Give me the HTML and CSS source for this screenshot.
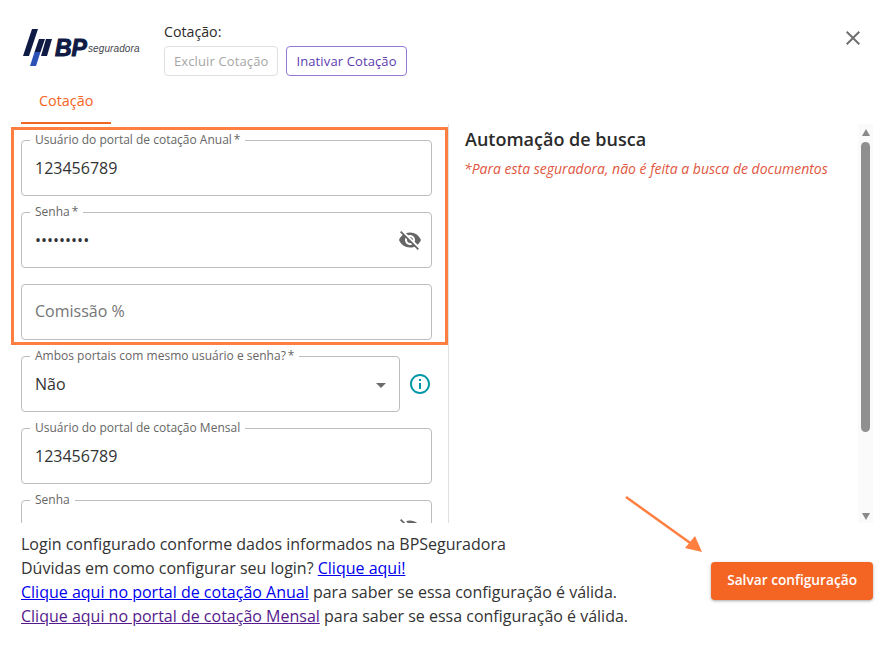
FILE: index.html
```html
<!DOCTYPE html>
<html lang="pt-BR">
<head>
<meta charset="utf-8">
<title>Cotação</title>
<link rel="stylesheet" href="styles.css">
</head>
<body>
<div class="dialog">
  <header class="header">
    <div class="logo">
      <svg class="logo-bars" width="33" height="40" viewBox="0 0 33 40">
        <polygon points="10,1 16,1 7,28 1,28" fill="#0f1a45"/>
        <polygon points="17,11 23,11 18.500,24 12.500,24" fill="#0f1a45"/>
        <polygon points="12.500,24 18.500,24 14,38 8,38" fill="#2c52b8"/>
        <polygon points="24,11 30,11 25,28 19,28" fill="#0f1a45"/>
      </svg>
      <span class="logo-bp">BP</span>
      <span class="logo-sub">seguradora</span>
    </div>
    <div class="quote">
      <div class="quote-label">Cotação:</div>
      <div class="quote-actions">
        <span class="btn btn-disabled">Excluir Cotação</span>
        <span class="btn btn-outline">Inativar Cotação</span>
      </div>
    </div>
    <svg class="close" width="24" height="24" viewBox="0 0 24 24"><path d="M19 6.41 17.59 5 12 10.59 6.41 5 5 6.41 10.59 12 5 17.59 6.41 19 12 13.41 17.59 19 19 17.59 13.41 12z"/></svg>
  </header>

  <nav class="tabs"><span class="tab">Cotação</span></nav>

  <main class="content">
    <section class="form">
      <div class="field"><span class="label">Usuário do portal de cotação Anual&#8201;*</span><span class="value">123456789</span></div>
      <div class="field"><span class="label">Senha&#8201;*</span><span class="value dots">•••••••••</span>
        <svg class="eye" width="24" height="24" viewBox="0 0 24 24"><path d="M12 7c2.76 0 5 2.24 5 5 0 .65-.13 1.26-.36 1.83l2.92 2.92c1.51-1.26 2.7-2.89 3.43-4.75-1.73-4.39-6-7.5-11-7.5-1.4 0-2.74.25-3.98.7l2.16 2.16C10.74 7.13 11.35 7 12 7zM2 4.27l2.28 2.28.46.46C3.08 8.3 1.78 10.02 1 12c1.73 4.39 6 7.5 11 7.5 1.55 0 3.03-.3 4.38-.84l.42.42L19.73 22 21 20.73 3.27 3 2 4.27zM7.53 9.8l1.55 1.55c-.05.21-.08.43-.08.65 0 1.66 1.34 3 3 3 .22 0 .44-.03.65-.08l1.55 1.55c-.67.33-1.41.53-2.2.53-2.76 0-5-2.24-5-5 0-.79.2-1.53.53-2.2zm4.31-.78 3.15 3.15.02-.16c0-1.66-1.34-3-3-3l-.17.01z"/></svg>
      </div>
      <div class="field"><span class="value placeholder">Comissão %</span></div>
      <div class="select-row">
        <div class="field field-select"><span class="label">Ambos portais com mesmo usuário e senha?&#8201;*</span><span class="value">Não</span><span class="caret"></span></div>
        <svg class="info" width="24" height="24" viewBox="0 0 24 24"><path d="M11 7h2v2h-2zm0 4h2v6h-2zm1-9C6.48 2 2 6.48 2 12s4.48 10 10 10 10-4.48 10-10S17.52 2 12 2zm0 18c-4.41 0-8-3.59-8-8s3.59-8 8-8 8 3.59 8 8-3.59 8-8 8z"/></svg>
      </div>
      <div class="field"><span class="label">Usuário do portal de cotação Mensal</span><span class="value">123456789</span></div>
      <div class="field"><span class="label">Senha</span>
        <svg class="eye" width="24" height="24" viewBox="0 0 24 24"><path d="M12 7c2.76 0 5 2.24 5 5 0 .65-.13 1.26-.36 1.83l2.92 2.92c1.51-1.26 2.7-2.89 3.43-4.75-1.73-4.39-6-7.5-11-7.5-1.4 0-2.74.25-3.98.7l2.16 2.16C10.74 7.13 11.35 7 12 7zM2 4.27l2.28 2.28.46.46C3.08 8.3 1.78 10.02 1 12c1.73 4.39 6 7.5 11 7.5 1.55 0 3.03-.3 4.38-.84l.42.42L19.73 22 21 20.73 3.27 3 2 4.27z"/></svg>
      </div>
    </section>
    <section class="automation">
      <h2 class="automation-title">Automação de busca</h2>
      <p class="automation-note">*Para esta seguradora, não é feita a busca de documentos</p>
    </section>
    <div class="scrollbar">
      <span class="scroll-up"></span>
      <span class="scroll-thumb"></span>
      <span class="scroll-down"></span>
    </div>
  </main>

  <footer class="footer">
    <div class="footer-text">
      <p>Login configurado conforme dados informados na BPSeguradora</p>
      <p>Dúvidas em como configurar seu login? <a class="link" href="#a">Clique aqui!</a></p>
      <p><a class="link" href="#b">Clique aqui no portal de cotação Anual</a> para saber se essa configuração é válida.</p>
      <p><a class="link link-visited" href="#c">Clique aqui no portal de cotação Mensal</a> para saber se essa configuração é válida.</p>
    </div>
    <span class="save">Salvar configuração</span>
  </footer>

  <div class="highlight"></div>
  <svg class="arrow" width="84" height="62" viewBox="0 0 84 62">
    <path d="M3 3 L70 51" stroke="#ff7f41" stroke-width="2.500" fill="none"/>
    <polygon points="79,58 62,54 72,42" fill="#ff7f41"/>
  </svg>
</div>
</body>
</html>
```
FILE: styles.css
```css
* { box-sizing: border-box; }
html, body { margin: 0; padding: 0; background: #fff; }
body { font-family: "Open Sans", sans-serif; color: #2b2b2b; }
p, h2 { margin: 0; }

.dialog { position: relative; width: 891px; height: 651px; overflow: hidden; }

.header { display: flex; height: 78px; padding: 22px 26px 0 22px; }
.logo { display: flex; align-items: flex-start; width: 142px; height: 46px; padding-top: 6px; }
.logo-bars { flex: none; }
.logo-bp { margin: 10px 0 0 0; font: italic 700 23px/20px "Liberation Sans", sans-serif; color: #0f1a45; -webkit-text-stroke: 1px #0f1a45; }
.logo-sub { margin: 15px 0 0 1px; font: italic 400 10px/12px "Liberation Sans", sans-serif; letter-spacing: .1px; color: #44464f; }

.quote { flex: 1; }
.quote-label { font-size: 14.2px; line-height: 19px; color: #2b2b2b; }
.quote-actions { display: flex; gap: 8px; margin-top: 5px; }
.btn { display: block; height: 30px; padding: 0 9px; border: 1px solid; border-radius: 4px; font-size: 13px; line-height: 29px; letter-spacing: .12px; }
.btn-disabled { color: #a6a6a6; border-color: #e0e0e0; }
.btn-outline { color: #5b3bb0; border-color: #9579d1; }
.close { fill: #6f6f6f; margin-top: 4px; }

.tabs { display: flex; height: 46px; padding-left: 21px; }
.tab { display: block; width: 90px; height: 46px; padding: 11px 0 0 18px; border-bottom: 2px solid #f46524; font-size: 14.400px; line-height: 24px; color: #f46524; }

.content { display: flex; height: 399px; overflow: hidden; padding-left: 21px; }
.form { flex: none; width: 428px; display: flex; flex-direction: column; gap: 16px; padding: 16px 16px 0 0; border-right: 1px solid #e0e0e0; }
.field { position: relative; flex: none; display: flex; align-items: center; width: 411px; height: 56px; padding: 0 13px; border: 1px solid #bdbdbd; border-radius: 4px; }
.label { position: absolute; left: 8px; top: -9px; padding: 0 5px; background: #fff; font-size: 12px; line-height: 16px; color: #666; white-space: nowrap; }
.value { font-size: 16px; line-height: 24px; color: #333; }
.dots { font-size: 16px; }
.placeholder { margin-bottom: 2px; color: #757575; }
.eye { position: absolute; right: 9px; top: 15px; fill: #666; }
.select-row { display: flex; align-items: center; gap: 8px; flex: none; }
.field-select { width: 379px; }
.caret { position: absolute; right: 13px; top: 26px; border-style: solid; border-width: 5px 5px 0; border-color: #6b6b6b transparent transparent; }
.info { fill: #0097a7; }

.automation { flex: 1; padding: 2px 0 0 15px; }
.automation-title { margin-left: 1px; font-size: 18px; line-height: 27px; font-weight: 600; color: #2b2b2b; }
.automation-note { margin-top: 6px; font-size: 14px; line-height: 19px; font-style: italic; color: #e0573f; }

.scrollbar { flex: none; display: flex; flex-direction: column; align-items: center; width: 15px; height: 399px; margin-right: 18px; padding-top: 5px; background: #fafafa; }
.scroll-up { border-style: solid; border-width: 0 4.5px 7px; border-color: transparent transparent #8a8a8a; }
.scroll-thumb { width: 9px; height: 290px; margin-top: 6px; border-radius: 5px; background: #8f8f8f; }
.scroll-down { margin-top: auto; margin-bottom: 3px; border-style: solid; border-width: 7px 4.5px 0; border-color: #8a8a8a transparent transparent; }

.footer { display: flex; justify-content: space-between; padding: 9px 18px 0 21px; }
.footer-text { font-size: 16px; line-height: 24px; color: #333; }
.link { color: #0000ee; text-decoration: underline; }
.link-visited { color: #551a8b; }
.save { display: block; align-self: flex-start; height: 38px; margin-top: 30px; padding: 0 16px; border-radius: 4px; background: #f46524; box-shadow: 0 1px 3px rgba(0,0,0,.35); color: #fff; font-size: 13.700px; font-weight: 600; line-height: 36px; }

.highlight { position: absolute; left: 11px; top: 127px; width: 437px; height: 218px; border: 3px solid #ff7f41; }
.arrow { position: absolute; left: 623px; top: 494px; }
```
